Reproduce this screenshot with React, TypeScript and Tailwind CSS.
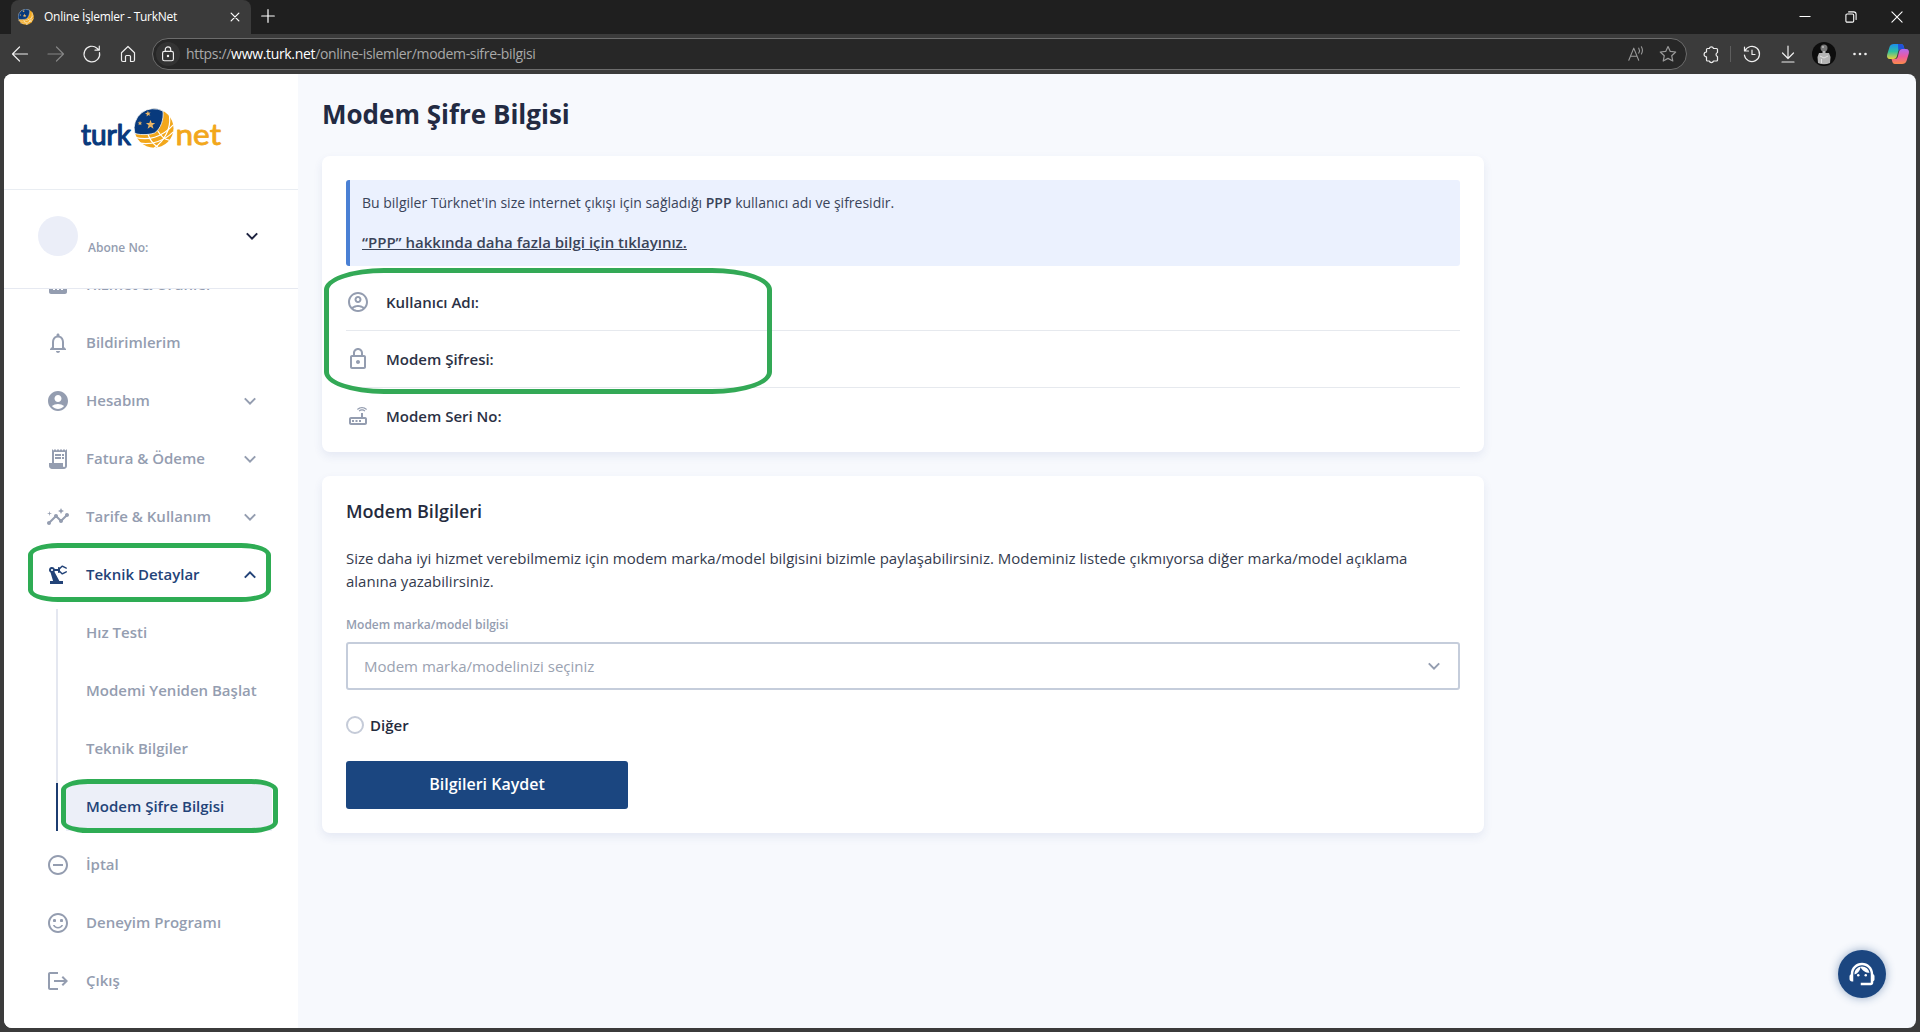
import { useState } from 'react';
import type { ReactNode } from 'react';
import type { IconType } from 'react-icons';
import {
  MdAccountCircle,
  MdAnalytics,
  MdInsights,
  MdLogout,
  MdNotificationsNone,
  MdOutlineAccountCircle,
  MdOutlineLock,
  MdOutlineRouter,
  MdPrecisionManufacturing,
  MdReceiptLong,
  MdRemoveCircleOutline,
  MdSentimentSatisfiedAlt,
  MdSupportAgent,
} from 'react-icons/md';

interface NavItem {
  label: string;
  icon: IconType;
  expandable?: boolean;
  children?: string[];
}

const NAV: NavItem[] = [
  { label: 'Hizmet & Ürünler', icon: MdAnalytics },
  { label: 'Bildirimlerim', icon: MdNotificationsNone },
  { label: 'Hesabım', icon: MdAccountCircle, expandable: true },
  { label: 'Fatura & Ödeme', icon: MdReceiptLong, expandable: true },
  { label: 'Tarife & Kullanım', icon: MdInsights, expandable: true },
  {
    label: 'Teknik Detaylar',
    icon: MdPrecisionManufacturing,
    expandable: true,
    children: ['Hız Testi', 'Modemi Yeniden Başlat', 'Teknik Bilgiler', 'Modem Şifre Bilgisi'],
  },
  { label: 'İptal', icon: MdRemoveCircleOutline },
  { label: 'Deneyim Programı', icon: MdSentimentSatisfiedAlt },
  { label: 'Çıkış', icon: MdLogout },
];

const INFO_ROWS = [
  { label: 'Kullanıcı Adı:', icon: MdOutlineAccountCircle },
  { label: 'Modem Şifresi:', icon: MdOutlineLock },
  { label: 'Modem Seri No:', icon: MdOutlineRouter },
];

function Line({ size = 20, className = '', width = 1.2, children }: { size?: number; className?: string; width?: number; children: ReactNode }) {
  return (
    <svg
      width={size}
      height={size}
      viewBox="0 0 20 20"
      fill="none"
      stroke="currentColor"
      strokeWidth={width}
      strokeLinecap="round"
      strokeLinejoin="round"
      className={`shrink-0 ${className}`}
    >
      {children}
    </svg>
  );
}

function Chevron({ up, className = '' }: { up?: boolean; className?: string }) {
  return (
    <svg width="12" height="8" viewBox="0 0 12 8" fill="none" stroke="currentColor" strokeWidth="2" className={`shrink-0 ${className}`}>
      <path d={up ? 'M0.8 6.6 6 1.4 11.2 6.6' : 'M0.8 1.4 6 6.6 11.2 1.4'} />
    </svg>
  );
}

function Globe() {
  return (
    <>
      <circle cx="20" cy="20" r="19.5" fill="#f2a71b" />
      <g fill="none" stroke="#fff" strokeWidth="1.2">
        <path d="M35.5 8C37 20 31 32 20 40" />
        <path d="M1 29C14 33 28 29 39 17" />
        <path d="M6 35C18 37 31 32 39 24" />
        <path d="M14 26C16 32 19 36 24 39" />
        <path d="M24 23C27 28 30 31 35 32" />
      </g>
      <path
        d="M29 2.8A19.5 19.5 0 0 0 0.8 25C3 26.6 14 27.2 20.5 24.8C27 20.5 30 11 29 2.8Z"
        fill="#083a7d"
        stroke="#fff"
        strokeWidth="0.8"
      />
      <g fill="#e9b565">
        <path d="m16.500 11.500 1.200 3.200 3.500.2-2.700 2.200 1 3.400-3-1.900-2.900 1.900 1-3.400-2.700-2.200 3.400-.2z" />
        <path d="m14 2.500.6 2 2-.3-1.300 1.600 1 1.800-2-.8-1.600 1.400.1-2.100-1.800-1 2.100-.5z" />
        <path d="m6 12.500.6 1.700 1.700.1-1.300 1.100.4 1.700-1.400-1-1.500 1 .5-1.700-1.400-1.100 1.800-.1z" />
      </g>
    </>
  );
}

function Logo() {
  return (
    <svg width="144" height="44" viewBox="0 0 144 44" className="shrink-0" fontFamily="Lato, sans-serif" fontSize="28" strokeLinejoin="round" strokeLinecap="round">
      <text x="2" y="37" textLength="50" lengthAdjust="spacingAndGlyphs" fill="#083a7d" stroke="#083a7d" strokeWidth="1.2">turk</text>
      <g transform="translate(55 0.2)">
        <Globe />
      </g>
      <text x="96.500" y="37" textLength="45.500" lengthAdjust="spacingAndGlyphs" fill="#f2a71b" stroke="#f2a71b" strokeWidth="0.8">net</text>
    </svg>
  );
}

function TabStrip() {
  return (
    <div className="flex h-[34px] shrink-0 bg-[#1f1f1f] text-white">
      <div className="ml-[11px] flex w-[240px] items-center rounded-t-lg bg-[#3b3b3b] pl-[7px] pr-[9px]">
        <svg width="16" height="16" viewBox="0 0 40 40" className="shrink-0">
          <Globe />
        </svg>
        <span className="ml-[10px] flex-1 whitespace-nowrap pb-px text-[12px] leading-4 tracking-[-0.28px]">Online İşlemler - TurkNet</span>
        <Line size={14}>
          <path d="M4.500 4.500 15.500 15.500M15.500 4.500 4.500 15.500" strokeWidth="1.800" />
        </Line>
      </div>
      <div className="ml-[10px] flex items-center pb-[2px]">
        <Line size={14}>
          <path d="M10 1V19M1 10H19" strokeWidth="1.700" />
        </Line>
      </div>
      <div className="ml-auto flex items-center gap-[34px] pr-[17px]">
        <Line size={12} width={1.7}>
          <path d="M1.500 9H18.500" />
        </Line>
        <Line size={12} width={1.8}>
          <rect x="1.500" y="5" width="13" height="13.500" rx="2" />
          <path d="M6 1.500H14.500A4 4 0 0 1 18.500 5.500V14" />
        </Line>
        <Line size={12} width={1.8}>
          <path d="M1.500 1.500 18.500 18.500M18.500 1.500 1.500 18.500" />
        </Line>
      </div>
    </div>
  );
}

function Copilot() {
  return (
    <svg width="24" height="22" viewBox="0 0 24 22" className="shrink-0">
      <defs>
        <linearGradient id="cp-left" x1="0" y1="0" x2="0" y2="1">
          <stop offset="0" stopColor="#1b8ff0" />
          <stop offset="0.5" stopColor="#2fc0a0" />
          <stop offset="1" stopColor="#e8d03a" />
        </linearGradient>
        <linearGradient id="cp-right" x1="0" y1="0" x2="0" y2="1">
          <stop offset="0" stopColor="#b06af0" />
          <stop offset="0.5" stopColor="#ec5aa0" />
          <stop offset="1" stopColor="#fb8a4a" />
        </linearGradient>
      </defs>
      <path d="M8 1H15C17 1 17.500 2.500 18 4.500L18.500 6H15C13 6 12.500 7 12 9L11 13C10.500 15 9.500 16 7.500 16H4C1.500 16 0.500 14 1.200 11.500L3.500 4C4.200 2 5.500 1 8 1Z" fill="url(#cp-left)" />
      <path d="M12 1H15C17 1 17.500 2.500 18 4.500L18.500 6H15C13.500 6 12.800 6.700 12.300 8Z" fill="#2150d8" />
      <path d="M16 21H9C7 21 6.500 19.500 6 17.500L5.500 16H9C11 16 11.500 15 12 13L13 9C13.500 7 14.500 6 16.500 6H20C22.500 6 23.500 8 22.800 10.500L20.500 18C19.800 20 18.500 21 16 21Z" fill="url(#cp-right)" />
    </svg>
  );
}

function Toolbar() {
  return (
    <div className="flex h-10 shrink-0 items-center bg-[#3b3b3b] text-[#eeeeee]">
      <div className="flex w-[152px] shrink-0 items-center gap-4 pl-[10px]">
        <Line>
          <path d="M17.500 10H2.500M9.500 3 2.500 10 9.500 17" />
        </Line>
        <Line className="text-[#858585]">
          <path d="M2 10H17.500M10.500 3 17.500 10 10.500 17" />
        </Line>
        <Line>
          <path d="M17.500 8.500A7.800 7.800 0 1 1 15 4.200L17 6M17.300 2V6.200H13" />
        </Line>
        <Line>
          <path d="M3.500 8.700 10 2.500 16.500 8.700V16Q16.500 17.500 15 17.500H12.500V12.500Q12.500 11.500 11.500 11.500H8.500Q7.500 11.500 7.500 12.500V17.500H5Q3.500 17.500 3.500 16Z" />
        </Line>
      </div>
      <div className="flex h-8 w-[1535px] shrink-0 items-center rounded-full border border-[#6c6c6c] bg-[#272727] pl-[3px] pr-2">
        <div className="flex h-6 w-6 items-center justify-center rounded-full bg-[#333333] pb-px">
          <Line size={18} width={1.3}>
            <rect x="4" y="7" width="12" height="10.500" rx="2" />
            <path d="M7 7V5A3 3 0 0 1 13 5V7" />
            <circle cx="10" cy="12.300" r="0.700" fill="currentColor" />
          </Line>
        </div>
        <span className="ml-[6px] flex-1 whitespace-nowrap text-[14px] leading-5 tracking-[-0.33px] text-[#a9a9a9]">
          https://<span className="text-white">www.turk.net</span>/online-islemler/modem-sifre-bilgisi
        </span>
        <Line size={18} className="mr-[13px] text-[#9a9a9a]">
          <path d="M2 17 7.500 3.500 13 17M4 12.500H11M13 3.500A5 5 0 0 1 13 9M16 2A8 8 0 0 1 16 10" />
        </Line>
        <Line size={20} className="text-[#9a9a9a]">
          <path d="M10 2.500 12.300 7.400 17.700 8 13.700 11.700 14.800 17 10 14.400 5.200 17 6.300 11.700 2.300 8 7.700 7.400Z" />
        </Line>
      </div>
      <div className="flex flex-1 items-center">
        <Line className="ml-[14px]">
          <path d="M5.500 8V5.500Q5.500 4.500 6.500 4.500H8.300A2.200 2.200 0 0 1 12.500 4.500H15.500Q16.500 4.500 16.500 5.500V8.500A2.100 2.100 0 0 0 16.500 12.500V16Q16.500 17 15.500 17H12.500A2.200 2.200 0 0 1 8.300 17H6.500Q5.500 17 5.500 16V12.800A2.400 2.400 0 0 1 5.500 8" />
        </Line>
        <span className="ml-[9px] h-4 w-px bg-[#5e5e5e]" />
        <Line className="ml-[11px]">
          <path d="M2.500 3V7H6.500M2.900 7A7.600 7.600 0 1 1 2.400 11M10 6V10.500H13" />
        </Line>
        <Line className="ml-4">
          <path d="M10 2V14M4.500 9 10 14.500 15.500 9M4 18H16" />
        </Line>
        <svg width="24" height="24" viewBox="0 0 24 24" className="ml-[14px] shrink-0">
          <circle cx="12" cy="12" r="12" fill="#0d0d0d" />
          <circle cx="12" cy="6" r="3.500" fill="#777" />
          <path d="M10.500 9H13.500V11H17L18.500 15 18 21Q12 23.500 6 21L5.500 15 7 11H10.500Z" fill="#b4b4b4" />
          <path d="M10 5H12M8 14 12 16 16 14M9.500 17V21" stroke="#e2e2e2" strokeWidth="1" fill="none" />
        </svg>
        <Line className="ml-[14px]">
          <g fill="currentColor" stroke="none">
            <circle cx="4.500" cy="10" r="1.300" />
            <circle cx="10" cy="10" r="1.300" />
            <circle cx="15.500" cy="10" r="1.300" />
          </g>
        </Line>
        <div className="ml-[16px] flex">
          <Copilot />
        </div>
      </div>
    </div>
  );
}

function Sidebar() {
  const [open, setOpen] = useState('Teknik Detaylar');
  const [active, setActive] = useState('Modem Şifre Bilgisi');

  return (
    <aside className="flex w-[294px] shrink-0 flex-col bg-white">
      <div className="flex h-[116px] shrink-0 items-start justify-center border-b border-[#e9edf2] pt-[34px]">
        <Logo />
      </div>
      <div className="flex h-[99px] shrink-0 items-center border-b border-[#e6e9f1] pb-[6px] pl-[34px] pr-[40px]">
        <span className="h-10 w-10 rounded-full bg-[#ebeef8]" />
        <span className="ml-[10px] mt-6 flex-1 text-[12px] font-semibold leading-4 text-[#949db0]">Abone No:</span>
        <Chevron className="text-[#1f2440]" />
      </div>
      <nav className="flex-1 overflow-hidden">
        <div className="-mt-[33px]">
          {NAV.map(item => {
            const expanded = item.label === open;
            return (
              <div key={item.label}>
                <button
                  onClick={() => item.expandable && setOpen(expanded ? '' : item.label)}
                  className={`flex h-[58px] w-full items-center pl-[42px] pr-[42px] text-left text-[15px] font-semibold ${expanded ? 'text-[#234378]' : 'text-[#949db0]'}`}
                >
                  <item.icon size={24} className="shrink-0" />
                  <span className="ml-4 flex-1 whitespace-nowrap pb-[2px]">{item.label}</span>
                  {item.expandable && <Chevron up={expanded} />}
                </button>
                {expanded && item.children && (
                  <ul className="mb-[5px] ml-[52px] mr-[26px] mt-[5px] flex flex-col gap-[10px] border-l-2 border-[#e4e7f0]">
                    {item.children.map(child => (
                      <li
                        key={child}
                        onClick={() => setActive(child)}
                        className={`-ml-[2px] flex h-12 border-l-2 pl-[8px] text-[15px] font-semibold ${child === active ? 'border-[#1c3c70] text-[#234378]' : 'border-transparent text-[#949db0]'}`}
                      >
                        <span className={`flex flex-1 items-center whitespace-nowrap pb-[2px] pl-[20px] ${child === active ? 'bg-[#eceff8]' : ''}`}>{child}</span>
                      </li>
                    ))}
                  </ul>
                )}
              </div>
            );
          })}
        </div>
      </nav>
    </aside>
  );
}

function InfoCard() {
  return (
    <section className="w-[1162px] rounded-lg bg-white px-6 pb-2 pt-6 shadow-[0_4px_10px_rgba(40,70,140,0.09)]">
      <div className="h-[86px] rounded-[3px] border-l-4 border-[#4a80d4] bg-[#ebf1fe] pl-3 pt-[13px] text-[#3a4459]">
        <p className="text-[14px] leading-5">
          Bu bilgiler Türknet'in size internet çıkışı için sağladığı <span className="font-semibold">PPP</span> kullanıcı adı ve şifresidir.
        </p>
        <a className="mt-[19px] block text-[15px] font-semibold leading-5 underline">“PPP” hakkında daha fazla bilgi için tıklayınız.</a>
      </div>
      <div className="mt-2 divide-y divide-[#e6e9ee]">
        {INFO_ROWS.map(row => (
          <div key={row.label} className="flex h-[57px] items-center text-[15px] font-semibold text-[#2b3145] last:h-[56px]">
            <row.icon size={24} className="shrink-0 text-[#949db0]" />
            <span className="ml-4">{row.label}</span>
          </div>
        ))}
      </div>
    </section>
  );
}

function ModemForm() {
  return (
    <section className="mt-6 h-[357px] w-[1162px] rounded-lg bg-white px-6 pt-[23px] shadow-[0_4px_10px_rgba(40,70,140,0.09)]">
      <h2 className="text-[18px] font-semibold leading-6 text-[#252b3d]">Modem Bilgileri</h2>
      <p className="mt-6 text-[15px] leading-[23px] text-[#343b4e]">
        Size daha iyi hizmet verebilmemiz için modem marka/model bilgisini bizimle paylaşabilirsiniz. Modeminiz listede çıkmıyorsa diğer marka/model açıklama alanına yazabilirsiniz.
      </p>
      <label className="mt-6 block text-[12px] font-semibold leading-4 text-[#949db0]">Modem marka/model bilgisi</label>
      <div className="mt-[9px] flex h-12 items-center justify-between rounded-[3px] border-2 border-[#c5cddb] pl-4 pr-[18px] text-[15px] text-[#9aa2b1]">
        <span>Modem marka/modelinizi seçiniz</span>
        <Chevron className="text-[#949db0]" />
      </div>
      <div className="mt-[25px] flex h-5 items-center text-[15px] font-semibold text-[#252b3d]">
        <span className="h-[18px] w-[18px] rounded-full border-2 border-[#c5cbd8]" />
        <span className="ml-[6px]">Diğer</span>
      </div>
      <button className="mt-[26px] h-12 w-[282px] rounded-[3px] bg-[#1b4680] pb-[2px] text-[16px] font-semibold text-white">Bilgileri Kaydet</button>
    </section>
  );
}

export default function App() {
  return (
    <div className="relative flex h-[1032px] w-[1920px] flex-col overflow-hidden bg-[#3b3b3b] font-['Open_Sans','Noto_Sans',sans-serif]">
      <TabStrip />
      <Toolbar />
      <div className="mx-1 mb-1 flex flex-1 overflow-hidden rounded-lg bg-[#f7f9fd]">
        <Sidebar />
        <main className="flex-1 pl-6 pt-6">
          <h1 className="mb-[26px] text-[26px] font-bold leading-8 text-[#222a42]">Modem Şifre Bilgisi</h1>
          <InfoCard />
          <ModemForm />
        </main>
      </div>

      {/* Support bubble */}
      <button className="absolute bottom-[34px] right-[34px] flex h-12 w-12 items-center justify-center rounded-full bg-[#1b4680] text-white shadow-[0_0_10px_rgba(27,70,128,0.45)]">
        <MdSupportAgent size={30} />
      </button>

      {/* Highlight rings */}
      <div className="pointer-events-none absolute left-[324px] top-[268px] h-[126px] w-[448px] rounded-[60px/22px] border-5 border-[#33a956]" />
      <div className="pointer-events-none absolute left-[28px] top-[543px] h-[59px] w-[243px] rounded-[30px/12px] border-5 border-[#2eac54]" />
      <div className="pointer-events-none absolute left-[61px] top-[779px] h-[54px] w-[217px] rounded-[27px/11px] border-5 border-[#2eac54]" />
    </div>
  );
}
